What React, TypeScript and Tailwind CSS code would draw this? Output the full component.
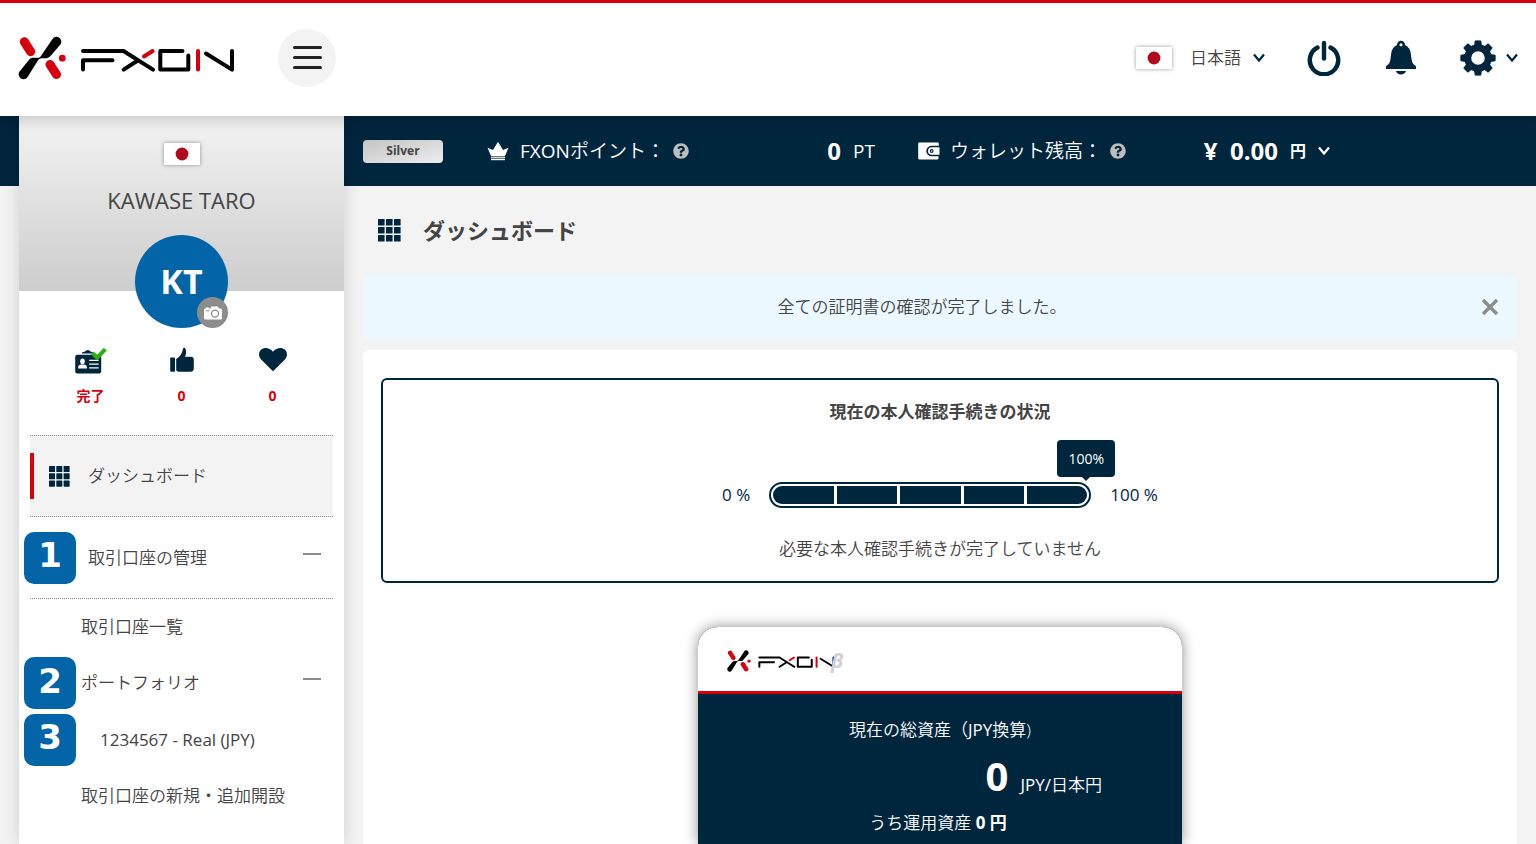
import React, { useState } from "react";
import { FaQuestionCircle } from "react-icons/fa";

const NAVY = "#00263e";
const RED = "#d9000d";

const stats = [
  { icon: "card", label: "本人確認", value: "完了" },
  { icon: "thumb", label: "いいね", value: "0" },
  { icon: "heart", label: "お気に入り", value: "0" },
];

function Logo({ className }: { className: string }) {
  return (
    <svg viewBox="0 0 217 44" className={className} role="img" aria-label="FXON">
      <g stroke={RED} strokeWidth="9" strokeLinecap="round">
        <line x1="6.3" y1="5.7" x2="12.7" y2="15.7" />
        <line x1="32" y1="28.5" x2="38.5" y2="38.5" />
      </g>
      <circle cx="44.3" cy="22.2" r="3.4" fill={RED} />
      <path d="M34.300 3.200 22.600 20.400 Q21.600 21.900 19.500 22.200 L28.500 22.200 Q31.500 21.800 33 19.500 L42.600 8.200 A4.700 4.700 0 0 0 34.300 3.200Z" />
      <path d="M9.600 40.900 20.400 23.700 Q21.600 22.200 24 21.800 L14.500 21.800 Q12 22.200 10.500 24.400 L1.400 35.700 A4.700 4.700 0 0 0 9.600 40.900Z" />
      <g fill="none" stroke="#000" strokeWidth="4" strokeLinecap="round" strokeLinejoin="round">
        <polyline points="65,15 105.5,15 135,33.6" />
        <polyline points="65,33.6 65,24.3 94.5,24.3" />
        <line x1="105.7" y1="33.6" x2="119" y2="25" />
        <polyline points="164.5,15 142.3,15 142.3,33.6 170.3,33.6 170.3,19.5" />
        <polyline points="188,17.5 214,33.6 214,15" />
      </g>
      <g stroke={RED} strokeWidth="4" strokeLinecap="round">
        <line x1="126" y1="20.5" x2="134.6" y2="15" />
        <line x1="180" y1="15" x2="180" y2="33.6" />
      </g>
    </svg>
  );
}

function JapanFlag() {
  return (
    <svg viewBox="0 0 36 22" className="h-[22px] w-9 shrink-0 shadow-[0_0_4px_rgba(0,0,0,0.4)]" aria-hidden="true">
      <rect width="36" height="22" fill="#fff" />
      <circle cx="18" cy="11" r="6.4" fill="#b00a1c" />
    </svg>
  );
}

function Chevron({ className }: { className: string }) {
  return (
    <svg viewBox="0 0 12 10" className={className} fill="none" stroke="currentColor" strokeWidth="2.2" aria-hidden="true">
      <path d="M1 1.5 6 7.5 11 1.5" />
    </svg>
  );
}

function GridIcon({ className }: { className: string }) {
  return (
    <svg viewBox="0 0 23 23" className={className} fill={NAVY} aria-hidden="true">
      {[0, 8, 16].map((y) =>
        [0, 8, 16].map((x) => <rect key={`${x}-${y}`} x={x} y={y} width="6.6" height="6.6" rx="0.6" />)
      )}
    </svg>
  );
}

function PowerIcon() {
  return (
    <svg viewBox="0 0 34 36" className="h-9 w-[34px]" fill="none" stroke={NAVY} strokeLinecap="round" aria-hidden="true">
      <path d="M10.500 7.500a14.200 14.200 0 1 0 13 0" strokeWidth="4.400" />
      <path d="M17 3v15.500" strokeWidth="4.400" />
    </svg>
  );
}

function BellIcon() {
  return (
    <svg viewBox="0 0 30 36" className="h-9 w-[30px]" fill={NAVY} aria-hidden="true">
      <path
        fillRule="evenodd"
        d="M15 .8a4 4 0 0 0-4 4.300C7.400 6.600 5.600 9.800 5.200 13.500L4.400 19.500C4 22.500 3 24.200 1.200 25.200.2 25.700 0 26.300 0 27v2h30v-2c0-.7-.2-1.300-1.200-1.800-1.800-1-2.800-2.700-3.200-5.700l-.8-6c-.4-3.700-2.200-6.900-5.800-8.400A4 4 0 0 0 15 .8Zm0 2.500a1.500 1.500 0 1 1 0 3 1.500 1.500 0 0 1 0-3Z"
      />
      <path d="M10 31h10a5.200 4.800 0 0 1-10 0Z" />
    </svg>
  );
}

function GearIcon() {
  return (
    <svg viewBox="0 0 36 36" className="size-9" aria-hidden="true">
      <g fill={NAVY} stroke={NAVY} strokeWidth="1" strokeLinejoin="round">
        {[0, 45, 90, 135, 180, 225, 270, 315].map((deg) => (
          <path key={deg} d="M15.200.9h5.600l.9 7.500h-7.400Z" transform={`rotate(${deg} 18 18)`} />
        ))}
      </g>
      <circle cx="18" cy="18" r="10.300" fill="none" stroke={NAVY} strokeWidth="7" />
    </svg>
  );
}

function CameraIcon() {
  return (
    <svg viewBox="0 0 18 14" className="h-3.5 w-[18px]" aria-hidden="true">
      <path
        fill="#fff"
        d="M1.200 2.500h.6V1.600h3v.9h1.400L7.500.6h6.300l1.300 1.900h1.700a1.200 1.200 0 0 1 1.200 1.200v8.600a1.200 1.200 0 0 1-1.200 1.200H1.200A1.200 1.200 0 0 1 0 12.300V3.700a1.200 1.200 0 0 1 1.200-1.200Z"
      />
      <circle cx="11" cy="7.600" r="3.500" fill="none" stroke="#8c8c8c" strokeWidth="1.300" />
      <path d="M2 4.800h3.500" stroke="#8c8c8c" strokeWidth="1" />
    </svg>
  );
}

function StatIcon({ name }: { name: string }) {
  if (name === "card") {
    return (
      <svg viewBox="0 0 32 28" className="h-7 w-8" aria-hidden="true">
        <path
          fill={NAVY}
          d="M2.200 7.800h22a2 2 0 0 1 2 2V24.500a2 2 0 0 1-2 2h-22a2 2 0 0 1-2-2V9.800a2 2 0 0 1 2-2ZM7 5.500 10 4.600a3.200 3.200 0 0 1 5.500 0L18 5.400v1H7Z"
        />
        <g fill="#fff">
          <ellipse cx="7.500" cy="14.300" rx="2.300" ry="2.900" />
          <path d="M3.200 21.500v-1.600c0-1.200 1.500-2 2.900-2.300h2.800c1.500.3 3 1.100 3 2.300v1.600Z" />
          <path d="M14.200 12.800h9.500v1.300h-9.500zM14.200 16.500h9.500v1.300h-9.500zM14.200 20.200h9.500v1.300h-9.500z" />
        </g>
        <path d="M17.300 6 22.300 10.600 30.300 2.200" fill="none" stroke="#2fae10" strokeWidth="4" />
      </svg>
    );
  }
  if (name === "thumb") {
    return (
      <svg viewBox="0 0 24 28" className="h-7 w-6" fill={NAVY} aria-hidden="true">
        <rect x=".2" y="10.500" width="4.800" height="14.200" rx=".7" />
        <path d="M6.200 12c3.500-1.800 6-5.300 6.800-10.200.2-1.100 1.200-1.400 1.900-.7 1.900 2.100 1.500 5.600.2 8.600h5.700a3 3 0 0 1 3 3v8.500a3.500 3.500 0 0 1-3.500 3.500H9.500c-1.300 0-2.300-.6-3.300-1.300Z" />
      </svg>
    );
  }
  return (
    <svg viewBox="0 0 28 28" className="size-7" fill={NAVY} aria-hidden="true">
      <path d="M14 24.200 2.100 12.500C-.8 9.400-.5 5 2.200 2.600c3-2.600 8.500-2.100 11.800 2.100 3.300-4.200 8.800-4.700 11.800-2.100 2.700 2.400 3 6.800.1 9.900Z" />
    </svg>
  );
}

function CrownIcon() {
  return (
    <svg viewBox="0 0 22 20" className="h-5 w-[22px]" fill="#fff" aria-hidden="true">
      <path d="M.5 6.800 6 9 11 .8 16 9 21.500 6.800 18 15H4Z" />
      <rect x="4" y="15.600" width="14" height="1.200" />
      <rect x="4" y="17.600" width="14" height="1.600" />
    </svg>
  );
}

function WalletIcon() {
  return (
    <svg viewBox="0 0 22 18" className="h-[18px] w-[22px]" aria-hidden="true">
      <path
        fill="#fff"
        d="M1.500.5H19.500A1.300 1.300 0 0 1 20.800 1.800V3.800H13.500a5.200 5.200 0 0 0 0 10.400H20.500V16.200a1.300 1.300 0 0 1-1.300 1.300H1.500A1.300 1.300 0 0 1 .2 16.200V1.800A1.300 1.300 0 0 1 1.500.5Z"
      />
      <path fill="#fff" d="M13.800 5.200H21.500v7.600h-7.700a3.800 3.800 0 0 1 0-7.600Z" />
      <circle cx="13.700" cy="9" r="1.900" fill={NAVY} />
      <circle cx="13.700" cy="9" r=".8" fill="#fff" />
    </svg>
  );
}

function StepBadge({ n }: { n: number }) {
  return (
    <span className="absolute -left-1.5 top-1/2 flex size-[52px] -translate-y-1/2 items-center justify-center rounded-[10px] bg-[#0364a8] pb-1 font-['DejaVu_Sans'] text-[34px] font-bold text-white">
      {n}
    </span>
  );
}

function Minus() {
  return <span className="mb-2 h-0.5 w-[18px] bg-[#8c8c8c]" />;
}

function Header() {
  return (
    <header className="relative z-20 flex h-[116px] items-center border-t-[3px] border-[#d9000d] bg-white px-[18px] pb-1 shadow-[0_2px_16px_rgba(0,0,0,0.22)]">
      <a href="#top">
        <Logo className="h-11 w-[217px]" />
      </a>
      <button
        type="button"
        aria-label="メニュー"
        className="ml-[43px] flex size-[58px] flex-col items-center justify-center gap-[7px] rounded-full bg-[#f3f3f3]"
      >
        <span className="h-[3px] w-[29px] rounded-full bg-[#222]" />
        <span className="h-[3px] w-[29px] rounded-full bg-[#222]" />
        <span className="h-[3px] w-[29px] rounded-full bg-[#222]" />
      </button>

      <div className="ml-auto flex items-center">
        <JapanFlag />
        <label className="relative ml-[18px] flex items-center">
          <select aria-label="言語" className="w-[75px] appearance-none bg-transparent text-[17px] leading-6 outline-none">
            <option>日本語</option>
          </select>
          <Chevron className="pointer-events-none absolute right-0 h-2.5 w-3 text-[#00263e]" />
        </label>
        <button type="button" aria-label="ログアウト" className="ml-[42px]">
          <PowerIcon />
        </button>
        <button type="button" aria-label="お知らせ" className="ml-[45px]">
          <BellIcon />
        </button>
        <button type="button" aria-label="設定" className="ml-11 flex items-center gap-2.5 text-[#00263e]">
          <GearIcon />
          <Chevron className="h-2.5 w-3" />
        </button>
      </div>
    </header>
  );
}

function StatusBar() {
  return (
    <div className="col-span-full row-start-1 flex items-center bg-[#00263e] pl-[363px] text-[19px] text-white">
      <span className="flex h-[23px] w-20 items-center justify-center rounded bg-linear-to-br from-[#c4c4c4] to-[#ededed] text-xs font-bold text-[#444]">
        Silver
      </span>
      <div className="ml-11 flex w-[388px] items-center">
        <CrownIcon />
        <span className="ml-[11px]">
          <span className="font-normal">FXON</span>ポイント：
        </span>
        <FaQuestionCircle className="ml-2 size-4 text-[#bdbdbd]" />
        <strong className="ml-auto text-2xl">0</strong>
        <span className="ml-3 font-normal">PT</span>
      </div>
      <div className="ml-[43px] flex w-[412px] items-center">
        <WalletIcon />
        <span className="ml-2.5">ウォレット残高：</span>
        <FaQuestionCircle className="ml-2 size-4 text-[#bdbdbd]" />
        <strong className="ml-auto text-2xl">¥&nbsp; 0.00</strong>
        <button type="button" aria-label="通貨" className="ml-3 flex items-center gap-3 text-base font-bold">
          円
          <Chevron className="h-2.5 w-3" />
        </button>
      </div>
    </div>
  );
}

function Sidebar() {
  const [open, setOpen] = useState(true);
  const [portfolioOpen, setPortfolioOpen] = useState(true);

  return (
    <aside className="relative z-10 col-start-2 row-span-2 row-start-1 bg-white shadow-[0_0_16px_rgba(0,0,0,0.15)]">
      <div className="flex h-[175px] flex-col items-center bg-linear-to-b from-[#f3f3f3] to-[#cdcdcd] pt-[27px]">
        <JapanFlag />
        <p className="mt-[19px] text-[22px] font-normal leading-8">KAWASE TARO</p>
        <div className="relative mt-[19px] flex size-[93px] shrink-0 items-center justify-center rounded-full bg-[#0364a8] text-[34px] font-bold text-white">
          KT
          <button
            type="button"
            aria-label="写真を変更"
            className="absolute bottom-0 right-0 flex size-[31px] items-center justify-center rounded-full bg-[#8c8c8c]"
          >
            <CameraIcon />
          </button>
        </div>
      </div>

      <ul className="mt-14 grid grid-cols-3 px-[26px]">
        {stats.map((s) => (
          <li key={s.icon} aria-label={s.label} className="flex flex-col items-center gap-[11px] text-sm font-bold text-[#d9000d]">
            <StatIcon name={s.icon} />
            {s.value}
          </li>
        ))}
      </ul>

      <nav className="mt-[29px] px-[11px] text-[17px]">
        <a href="#dashboard" className="flex h-[82px] items-center border-y border-dotted border-[#8c8c8c] bg-[#f3f3f3]">
          <span className="h-[46px] w-1 bg-[#d9000d]" />
          <GridIcon className="ml-[15px] size-[21px]" />
          <span className="ml-[18px]">ダッシュボード</span>
        </a>
        <button
          type="button"
          onClick={() => setOpen(!open)}
          className="relative flex h-[82px] w-full items-center justify-between border-b border-dotted border-[#8c8c8c] pl-[58px] pr-3"
        >
          <StepBadge n={1} />
          取引口座の管理
          <Minus />
        </button>
        {open && (
          <ul>
            <li>
              <a href="#accounts" className="flex h-14 items-center pl-[51px]">
                取引口座一覧
              </a>
            </li>
            <li>
              <button
                type="button"
                onClick={() => setPortfolioOpen(!portfolioOpen)}
                className="relative flex h-14 w-full items-center justify-between pl-[51px] pr-3"
              >
                <StepBadge n={2} />
                ポートフォリオ
                <Minus />
              </button>
            </li>
            {portfolioOpen && (
              <li>
                <a href="#1234567" className="relative flex h-[57px] items-center pl-[70px] font-normal">
                  <StepBadge n={3} />
                  1234567 - Real (JPY)
                </a>
              </li>
            )}
            <li>
              <a href="#open-account" className="flex h-14 items-center pl-[51px]">
                取引口座の新規・追加開設
              </a>
            </li>
          </ul>
        )}
      </nav>
    </aside>
  );
}

function VerificationStatus() {
  return (
    <section className="rounded-md border-2 border-[#00263e] py-5 text-center text-[17px] leading-6">
      <h2 className="font-bold">現在の本人確認手続きの状況</h2>
      <div className="mt-[58px] flex items-center justify-center gap-[19px] font-normal text-[#00263e]">
        <span>0 %</span>
        <div className="relative h-[26px] w-[322px] rounded-full border-2 border-[#00263e] p-0.5">
          <div className="flex h-full gap-[3px] overflow-hidden rounded-full">
            {[20, 40, 60, 80, 100].map((step) => (
              <span key={step} className="flex-1 bg-[#00263e]" />
            ))}
          </div>
          <div className="absolute -right-[26px] bottom-[29px] flex h-[37px] w-[58px] items-center justify-center rounded bg-[#00263e] text-sm text-white">
            100%
            <span className="absolute -bottom-1 left-6 border-x-[5px] border-t-[5px] border-x-transparent border-t-[#00263e]" />
          </div>
        </div>
        <span>100 %</span>
      </div>
      <p className="mt-[29px]">必要な本人確認手続きが完了していません</p>
    </section>
  );
}

function AssetCard() {
  return (
    <section className="mx-auto mt-11 flex w-[484px] flex-1 flex-col overflow-hidden rounded-t-[20px] bg-[#00263e] text-center text-[17px] leading-6 text-white shadow-[0_0_14px_rgba(0,0,0,0.45)]">
      <div className="flex h-[67px] items-center border-b-[3px] border-[#d9000d] bg-white pl-[29px] pt-1">
        <Logo className="h-[22px] w-[108px]" />
        <span className="-ml-1 text-xl font-bold italic text-[#d0d0d0]">β</span>
      </div>
      <p className="mt-6">
        現在の総資産（<span className="font-normal">JPY</span>換算)
      </p>
      <p className="mt-3.5 flex items-baseline justify-end gap-3 pr-20 leading-10">
        <strong className="text-[40px]">0</strong>
        <span>
          <span className="font-normal">JPY/</span>日本円
        </span>
      </p>
      <p className="mt-1.5 pr-1">
        うち運用資産 <strong>0 円</strong>
      </p>
    </section>
  );
}

function App() {
  const [noticeOpen, setNoticeOpen] = useState(true);

  return (
    <div className="flex min-h-screen flex-col bg-[#f3f3f3] font-['Open_Sans','Noto_Sans_CJK_JP',sans-serif] font-[350] text-[#444]">
      <Header />
      <div className="grid flex-1 grid-cols-[19px_325px_minmax(0,1fr)] grid-rows-[70px_1fr]">
        <StatusBar />
        <Sidebar />
        <main className="col-start-3 row-start-2 flex flex-col px-[19px]">
          <h1 className="flex h-[89px] items-center gap-[22px] pl-[15px] text-[22px] font-bold">
            <GridIcon className="size-[23px]" />
            ダッシュボード
          </h1>
          {noticeOpen && (
            <div className="mb-[11px] flex h-16 items-center rounded-md bg-[#ecf8ff] pr-[18px] text-[17px]">
              <p className="flex-1 text-center">全ての証明書の確認が完了しました。</p>
              <button type="button" aria-label="閉じる" onClick={() => setNoticeOpen(false)}>
                <svg viewBox="0 0 18 18" className="size-[18px]" stroke="#8c8c8c" strokeWidth="3.4" aria-hidden="true">
                  <path d="M2 2 16 16M16 2 2 16" />
                </svg>
              </button>
            </div>
          )}
          <div className="flex flex-1 flex-col rounded-t-md bg-white px-[18px] pt-7">
            <VerificationStatus />
            <AssetCard />
          </div>
        </main>
      </div>
    </div>
  );
}

export default App;
